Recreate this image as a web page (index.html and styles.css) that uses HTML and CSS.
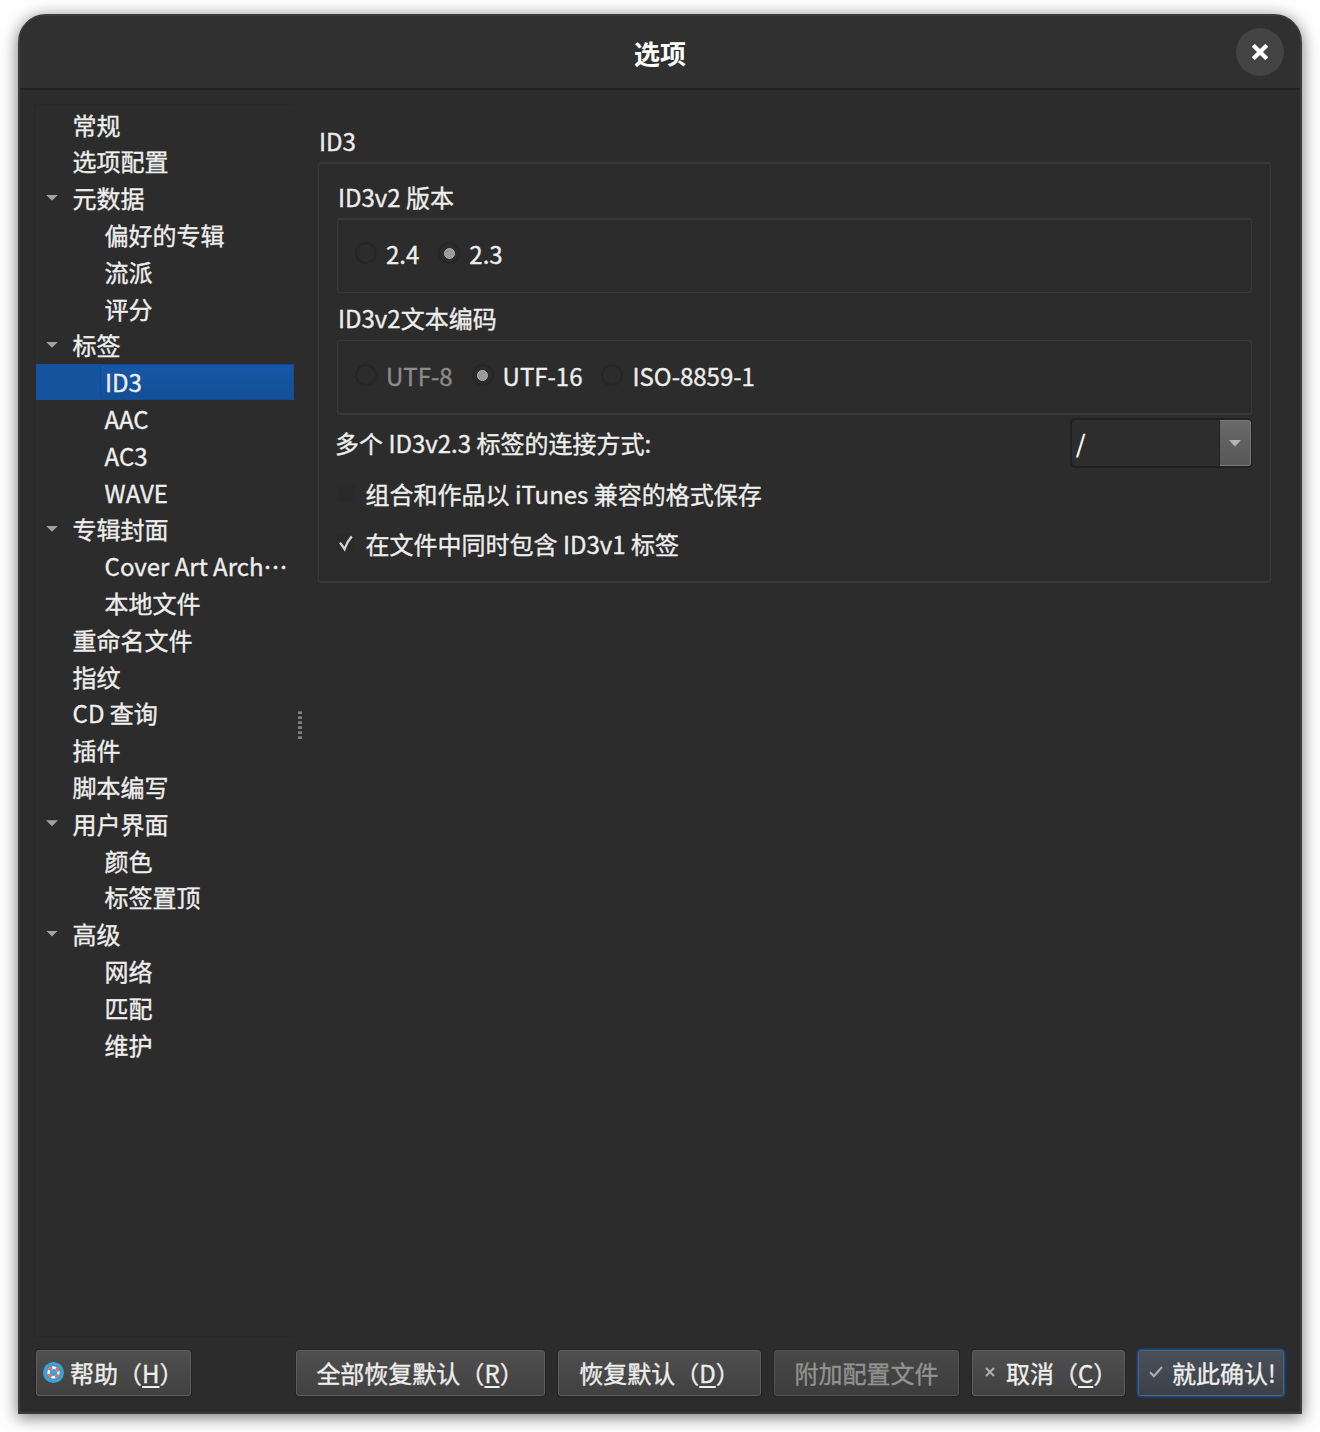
FILE: index.html
```html
<!DOCTYPE html>
<html lang="zh-CN">
<head>
<meta charset="utf-8">
<title>选项</title>
<link rel="stylesheet" href="styles.css">
</head>
<body>
<div class="window">
  <header class="titlebar">
    <h1 class="title">选项</h1>
    <button class="close" aria-label="关闭"><svg width="18" height="18" viewBox="0 0 18 18"><path d="M2.2 2.2 15.8 15.8M15.8 2.2 2.2 15.8" stroke="#fff" stroke-width="4.2"/></svg></button>
  </header>
  <main class="main">
    <nav class="tree">
      <div class="row">常规</div>
      <div class="row">选项配置</div>
      <div class="row open">元数据</div>
      <div class="row child">偏好的专辑</div>
      <div class="row child">流派</div>
      <div class="row child">评分</div>
      <div class="row open">标签</div>
      <div class="row child selected"><span class="cell">ID3</span></div>
      <div class="row child">AAC</div>
      <div class="row child">AC3</div>
      <div class="row child">WAVE</div>
      <div class="row open">专辑封面</div>
      <div class="row child">Cover Art Arch⋯</div>
      <div class="row child">本地文件</div>
      <div class="row">重命名文件</div>
      <div class="row">指纹</div>
      <div class="row">CD 查询</div>
      <div class="row">插件</div>
      <div class="row">脚本编写</div>
      <div class="row open">用户界面</div>
      <div class="row child">颜色</div>
      <div class="row child">标签置顶</div>
      <div class="row open">高级</div>
      <div class="row child">网络</div>
      <div class="row child">匹配</div>
      <div class="row child">维护</div>
    </nav>
    <div class="splitter"><i></i><i></i><i></i><i></i><i></i><i></i></div>
    <section class="page">
      <h2 class="label page-label">ID3</h2>
      <div class="group outer">
        <h3 class="label">ID3v2 版本</h3>
        <div class="group radios version">
          <label class="radio"><span class="dot"></span>2.4</label>
          <label class="radio"><span class="dot on"></span>2.3</label>
        </div>
        <h3 class="label encoding-label">ID3v2文本编码</h3>
        <div class="group radios encoding">
          <label class="radio disabled"><span class="dot"></span>UTF-8</label>
          <label class="radio"><span class="dot on"></span>UTF-16</label>
          <label class="radio"><span class="dot"></span>ISO-8859-1</label>
        </div>
        <div class="join">
          <span>多个 ID3v2.3 标签的连接方式:</span>
          <div class="combo"><span class="combo-text">/</span><span class="combo-button"><svg width="12" height="7" viewBox="0 0 12 7"><path d="M0 0h12L6 6.5z" fill="#b4b4b4"/></svg></span></div>
        </div>
        <label class="check"><span class="box"></span>组合和作品以 iTunes 兼容的格式保存</label>
        <label class="check"><span class="box"><svg width="18" height="18" viewBox="0 0 18 18"><path d="M3 8.6 7.6 15Q10 7.6 14.8 2.4" fill="none" stroke="#d2d2d2" stroke-width="2.4"/></svg></span>在文件中同时包含 ID3v1 标签</label>
      </div>
    </section>
  </main>
  <footer class="footer">
    <button class="btn help"><svg width="21" height="21" viewBox="0 0 21 21"><circle cx="10.5" cy="10.5" r="10.5" fill="#3ba2d4"/><circle cx="10.5" cy="10.5" r="7" fill="#2d86b6"/><circle cx="10.5" cy="10.5" r="4.9" fill="#3ba2d4" stroke="#fff" stroke-width="2.6"/><circle cx="10.5" cy="10.5" r="4.9" fill="none" stroke="#f0635f" stroke-width="2.6" stroke-dasharray="3.85 3.85" stroke-dashoffset="-1.92"/></svg><span>帮助（<u>H</u>）</span></button>
    <button class="btn restore-all"><span>全部恢复默认（<u>R</u>）</span></button>
    <button class="btn restore"><span>恢复默认（<u>D</u>）</span></button>
    <button class="btn attach" disabled><span>附加配置文件</span></button>
    <button class="btn cancel"><svg width="10" height="10" viewBox="0 0 10 10"><path d="M1 1 9 9M9 1 1 9" stroke="#b0b0b0" stroke-width="2"/></svg><span>取消（<u>C</u>）</span></button>
    <button class="btn ok"><svg width="14" height="12" viewBox="0 0 14 12"><path d="M1 6.2 4.9 10.2 13 1" fill="none" stroke="#b0b0b0" stroke-width="2"/></svg><span>就此确认!</span></button>
  </footer>
</div>
</body>
</html>
```

FILE: styles.css
```css
*, *::before, *::after { box-sizing: border-box; }

body {
  margin: 0;
  padding: 14px 18px 18px;
  height: 1432px;
  overflow: hidden;
  background: #fff;
  color: #eeeeec;
  font: 400 24px/36px "Noto Sans CJK SC", sans-serif;
  -webkit-text-stroke: .35px;
  white-space: nowrap;
}

h1, h2, h3 { margin: 0; font: inherit; }
button { font: inherit; color: inherit; border: 0; padding: 0; }
svg { display: block; flex: none; }

.window {
  display: flex;
  flex-direction: column;
  height: 1400px;
  border: 2px solid #3b3b3b;
  border-radius: 28px 28px 0 0;
  background: #2c2c2c;
  box-shadow: 0 3px 16px 1px rgba(0, 0, 0, .5);
  overflow: hidden;
}

/* Title bar */
.titlebar {
  flex: none;
  display: grid;
  grid-template-columns: 1fr auto 1fr;
  align-items: center;
  height: 74px;
  padding: 0 16px;
  background: #303030;
  border-bottom: 2px solid #202020;
}
.title {
  grid-column: 2;
  padding-top: 2px;
  font-size: 26px;
  font-weight: 700;
  color: #fff;
  -webkit-text-stroke: 0;
}
.close {
  justify-self: end;
  display: grid;
  place-items: center;
  width: 48px;
  height: 48px;
  border-radius: 50%;
  background: #444;
}

.main { flex: none; display: flex; height: 1247px; padding-top: 14px; }

/* Navigation tree */
.tree {
  flex: none;
  width: 260px;
  margin-left: 14px;
  padding: 1.7px 0 0 1px;
  border: 1px solid #292929;
  border-right-width: 0;
}
.row { height: 36.8px; line-height: 36.8px; padding-left: 36.6px; }
.child { padding-left: 68.6px; }
.open { display: flex; align-items: center; padding-left: 10px; }
.open::before {
  content: "";
  width: 12px;
  height: 6px;
  margin: -2px 14.6px 0 0;
  background: #a2a2a2;
  clip-path: polygon(0 0, 100% 0, 50% 100%);
}
.selected { height: 36px; margin: -.3px 0 1.1px; padding-left: 64px; background: #15539e; }
.cell {
  display: block;
  height: 36px;
  padding-left: 4px;
  border: 1px solid #134b8f;
  border-radius: 3px;
  line-height: 34px;
  background: linear-gradient(#1657a7, #144f97);
}

.splitter {
  flex: none;
  display: flex;
  flex-direction: column;
  gap: 2px;
  width: 24px;
  padding: 607px 0 0 4px;
}
.splitter i { width: 4px; height: 3px; background: #808080; border-top: 1px solid #666; }

/* Option page */
.page { width: 953px; padding-top: 19px; }
.label { height: 36px; padding-left: 1px; }
.page-label { height: 39px; }
.group { border: 1px solid #383838; border-radius: 3px; }
.outer { height: 421px; padding: 15px 18px; border-top-width: 2px; border-bottom-width: 2px; }
.outer > .label { height: 39px; }
.outer > .encoding-label { height: 47px; padding-top: 7px; }
.radios { display: flex; align-items: center; height: 75px; padding-left: 17px; }
.version { border-top-width: 2px; padding-bottom: 5px; }
.encoding { border-bottom-width: 2px; padding-bottom: 3px; }
.radio { display: flex; align-items: center; margin-right: 19px; }
.disabled { color: #8c8c89; }
.dot {
  display: grid;
  place-items: center;
  width: 22px;
  height: 22px;
  margin: -1px 9px 0 0;
  border: 2px solid #262626;
  border-radius: 50%;
}
.on::after { content: ""; width: 11px; height: 11px; border-radius: 50%; background: #999; border: 1px solid #b0b0b0; }
.join { display: flex; justify-content: space-between; align-items: center; height: 50px; margin: 3px 0 0 -2px; }
.combo {
  display: flex;
  width: 182px;
  height: 50px;
  border: 2px solid #202020;
  border-right-width: 1px;
  border-radius: 5px;
  background: #2d2d2d;
}
.combo-text { flex: 1; padding: 5px 0 0 4px; color: #fff; }
.combo-button {
  display: grid;
  place-items: center;
  width: 32px;
  border: 1px solid #777;
  border-left: 1px solid #202020;
  border-radius: 0 3px 3px 0;
  background: linear-gradient(#696969, #585858);
}
.check { display: flex; align-items: center; height: 50px; }
.join + .check { margin-top: 1px; }
.box { width: 18px; height: 18px; margin: -2px 10.5px 0 0; background: #2a2a2a; }

/* Bottom buttons */
.footer { display: flex; flex: none; padding: 0 15px 0 16px; gap: 13px; height: 48px; margin-top: 12px; align-items: center; }
.btn {
  display: flex;
  flex: none;
  align-items: center;
  justify-content: center;
  height: 46px;
  border: 1px solid #5e5e5e;
  border-radius: 3px;
  background: linear-gradient(#4f4f4f, #414141);
  box-shadow: 0 0 0 1px #252525;
}
.btn svg { margin-top: -2px; }
.btn u { text-decoration-thickness: 2px; text-underline-offset: 3px; text-decoration-skip-ink: none; }
.btn:disabled { color: #929290; background: linear-gradient(#484848, #3d3d3d); border-color: #525252; }
.help { width: 155px; margin-right: 92px; justify-content: flex-start; padding-left: 6px; gap: 6px; }
.restore-all { width: 249px; padding-right: 1px; }
.restore { width: 203px; }
.attach { width: 185px; }
.cancel { width: 153px; justify-content: flex-start; padding-left: 12px; gap: 11px; }
.ok {
  width: 146px;
  justify-content: flex-start;
  padding-left: 10px;
  gap: 9px;
  border-color: #5b6066;
  background: linear-gradient(#4a505a, #3c4149);
  box-shadow: 0 0 0 1.5px #15478a;
}
```
